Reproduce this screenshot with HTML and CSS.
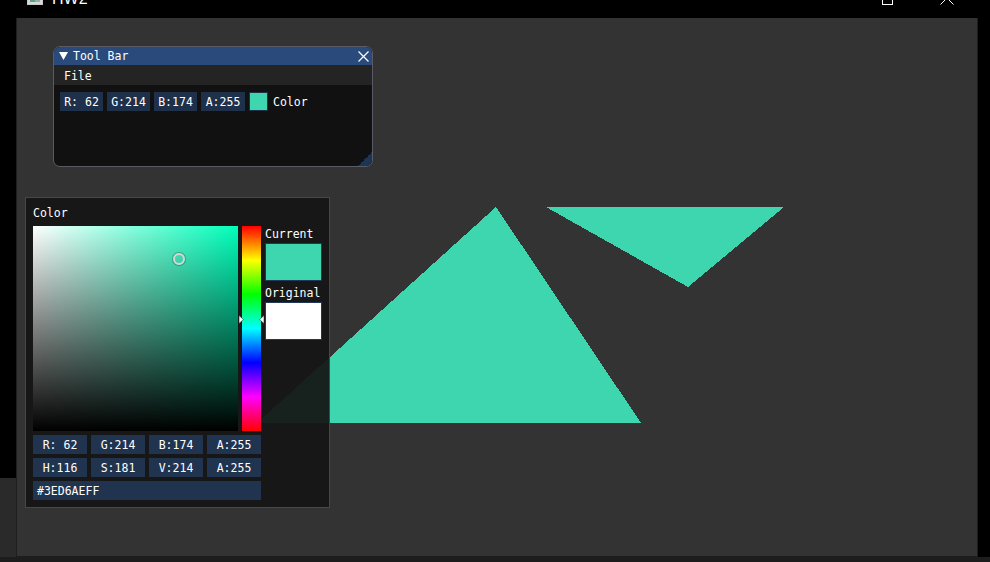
FILE: index.html
```html
<!DOCTYPE html>
<html>
<head>
<meta charset="utf-8">
<title>HW2</title>
<link rel="stylesheet" href="styles.css">
</head>
<body>
<div class="screen">
  <div class="leftstrip"></div>
  <div class="app">
    <div class="titlebar">
      <div class="appicon"><div class="appicon-inner"></div></div>
      <span class="apptitle">HW2</span>
      <div class="maxbtn"></div>
      <svg class="closebtn" width="14" height="14" viewBox="0 0 14 14"><path d="M0.5 0.5 L13.5 13.5 M13.5 0.5 L0.5 13.5" stroke="#fff" stroke-width="1" fill="none"/></svg>
    </div>
    <div class="client">
      <svg class="scene" width="960" height="538" viewBox="0 0 960 538" shape-rendering="crispEdges">
        <polygon points="479,189 240,405 624,405" fill="#3ed6ae"/>
        <polygon points="529,189 767,189 671,269" fill="#3ed6ae"/>
      </svg>

      <div class="tb-win">
        <div class="tb-title">
          <svg class="tb-arrow" width="9" height="8" viewBox="0 0 9 8"><polygon points="0,0 9,0 4.5,8" fill="#fff"/></svg>
          <span class="tb-title-text">Tool Bar</span>
          <svg class="tb-close" width="11" height="11" viewBox="0 0 11 11"><path d="M0.5 0.5 L10.5 10.5 M10.5 0.5 L0.5 10.5" stroke="#fff" stroke-width="1.2" fill="none"/></svg>
        </div>
        <div class="tb-menu"><span>File</span></div>
        <div class="tb-body">
          <div class="tb-row">
            <div class="fbox">R: 62</div>
            <div class="fbox">G:214</div>
            <div class="fbox">B:174</div>
            <div class="fbox fbox-wide">A:255</div>
            <div class="swatch"></div>
            <span class="swatch-label">Color</span>
          </div>
          <div class="grip"></div>
        </div>
      </div>

      <div class="pop">
        <div class="pop-label">Color</div>
        <div class="picker">
          <div class="sv">
            <div class="sv-cursor"></div>
          </div>
          <div class="hue">
            <svg class="hue-arrows" width="25" height="9" viewBox="0 0 25 9">
              <polygon points="0,0.5 4.5,4.5 0,8.5" fill="#fff" stroke="#333" stroke-width="0.6"/>
              <polygon points="25,0.5 20.5,4.5 25,8.5" fill="#fff" stroke="#333" stroke-width="0.6"/>
            </svg>
          </div>
          <div class="side">
            <div class="side-label">Current</div>
            <div class="big-swatch big-current"></div>
            <div class="side-label">Original</div>
            <div class="big-swatch big-original"></div>
          </div>
        </div>
        <div class="rows">
          <div class="pbox">R: 62</div>
          <div class="pbox">G:214</div>
          <div class="pbox">B:174</div>
          <div class="pbox">A:255</div>
          <div class="pbox">H:116</div>
          <div class="pbox">S:181</div>
          <div class="pbox">V:214</div>
          <div class="pbox">A:255</div>
          <div class="pbox hex">#3ED6AEFF</div>
        </div>
      </div>
    </div>
  </div>
  <div class="rightstrip"></div>
</div>
</body>
</html>
```
FILE: styles.css
```css
html, body {
  margin: 0;
  padding: 0;
  background: #000;
}
body {
  font-family: "DejaVu Sans Mono", "Liberation Mono", monospace;
  font-size: 11.5px;
  color: #fff;
}
.screen {
  width: 990px;
  height: 562px;
  display: flex;
  align-items: flex-start;
  background: linear-gradient(#000 0 557px, #1d1d1d 557px);
  overflow: hidden;
}
.leftstrip {
  width: 16px;
  height: 557px;
  flex: none;
  background: linear-gradient(#000 0 478px, #2a2a2a 478px);
}
.rightstrip {
  width: 12px;
  height: 557px;
  flex: none;
  background: #000;
}
.app {
  width: 962px;
  height: 557px;
  flex: none;
  display: flex;
  flex-direction: column;
}
.titlebar {
  height: 18px;
  flex: none;
  background: #000;
  display: flex;
  align-items: flex-start;
  overflow: hidden;
}
.appicon {
  width: 16px;
  height: 16px;
  margin-left: 11px;
  margin-top: -11px;
  box-sizing: border-box;
  border: 1px solid #c9c9c9;
  background: #d8d8d8;
  padding: 2px;
  flex: none;
}
.appicon-inner {
  width: 100%;
  height: 100%;
  background: linear-gradient(90deg, #5aa27a 0 55%, #8fb1a8 55%);
}
.apptitle {
  font-family: "Liberation Sans", Arial, sans-serif;
  font-size: 16px;
  line-height: 16px;
  margin-left: 9px;
  margin-top: -9px;
  color: #fff;
}
.maxbtn {
  width: 11px;
  height: 11px;
  box-sizing: border-box;
  border: 1px solid #fff;
  margin-left: auto;
  margin-top: -6px;
  flex: none;
}
.closebtn {
  margin-left: 47px;
  margin-right: 24px;
  margin-top: -9px;
  flex: none;
}
.client {
  position: relative;
  height: 539px;
  box-sizing: border-box;
  background: #333333;
  border: 1px solid #1e1e1e;
  border-top: 0;
}
.scene {
  position: absolute;
  left: 0;
  top: 0;
}

/* Tool Bar window */
.tb-win {
  position: absolute;
  left: 36px;
  top: 28px;
  width: 320px;
  height: 121px;
  box-sizing: border-box;
  border: 1px solid #5a5a64;
  border-radius: 7px;
  overflow: hidden;
  background: #111111;
  display: flex;
  flex-direction: column;
}
.tb-title {
  height: 18px;
  flex: none;
  background: #294a7a;
  display: flex;
  align-items: center;
  padding-left: 5px;
}
.tb-arrow {
  flex: none;
}
.tb-title-text {
  margin-left: 5px;
  line-height: 15px;
  padding-top: 1px;
}
.tb-close {
  margin-left: auto;
  margin-right: 3px;
  flex: none;
}
.tb-menu {
  height: 20px;
  flex: none;
  background: #242424;
  display: flex;
  align-items: center;
  padding-left: 10px;
  padding-top: 1px;
  box-sizing: border-box;
}
.tb-body {
  flex: 1;
  position: relative;
  padding: 7px 6px;
}
.tb-row {
  display: flex;
  align-items: center;
  gap: 4px;
}
.fbox {
  width: 43px;
  height: 19px;
  box-sizing: border-box;
  padding-top: 1px;
  background: #1e304a;
  display: flex;
  align-items: center;
  justify-content: center;
  line-height: 13px;
}
.fbox-wide {
  width: 44px;
}
.swatch {
  width: 19px;
  height: 19px;
  box-sizing: border-box;
  border: 1px solid #1e304a;
  background: #3ed6ae;
}
.swatch-label {
  margin-left: 1px;
  line-height: 13px;
  padding-top: 1px;
}
.grip {
  position: absolute;
  right: 0;
  bottom: 0;
  width: 14px;
  height: 14px;
  background: linear-gradient(to top left, #1d3555 50%, transparent 50%);
}

/* Color picker popup */
.pop {
  position: absolute;
  left: 8px;
  top: 179px;
  width: 305px;
  height: 311px;
  box-sizing: border-box;
  border: 1px solid #474747;
  background: rgba(21, 21, 21, 0.94);
  padding: 7px;
}
.pop-label {
  height: 13px;
  line-height: 17px;
  margin-bottom: 8px;
}
.picker {
  display: flex;
  gap: 4px;
}
.sv {
  width: 205px;
  height: 205px;
  flex: none;
  position: relative;
  background:
    linear-gradient(to top, #000 0%, rgba(0, 0, 0, 0) 100%),
    linear-gradient(to right, #fff 0%, #00ffba 100%);
}
.sv-cursor {
  position: absolute;
  left: 140px;
  top: 27px;
  width: 12px;
  height: 12px;
  box-sizing: border-box;
  border-radius: 50%;
  border: 2px solid #d6d6d6;
  box-shadow: 0 0 0 1px rgba(0, 0, 0, 0.25);
}
.hue {
  width: 19px;
  height: 205px;
  flex: none;
  position: relative;
  background: linear-gradient(#f00 0%, #ff0 16.67%, #0f0 33.33%, #0ff 50%, #00f 66.67%, #f0f 83.33%, #f00 100%);
}
.hue-arrows {
  position: absolute;
  left: -3px;
  top: 89px;
}
.side {
  width: 57px;
  flex: none;
  display: flex;
  flex-direction: column;
}
.side-label {
  height: 13px;
  line-height: 17px;
  margin-bottom: 4px;
}
.big-swatch {
  height: 38px;
  box-sizing: border-box;
  border: 1px solid #22385a;
  margin-bottom: 4px;
}
.big-current {
  background: #3ed6ae;
}
.big-original {
  background: #ffffff;
}
.rows {
  margin-top: 4px;
  width: 228px;
  display: grid;
  grid-template-columns: repeat(4, 54px);
  gap: 4px;
}
.pbox {
  height: 19px;
  box-sizing: border-box;
  padding-top: 1px;
  background: #21344f;
  display: flex;
  align-items: center;
  justify-content: center;
  line-height: 13px;
}
.hex {
  grid-column: 1 / -1;
  justify-content: flex-start;
  padding-left: 4px;
}
```
